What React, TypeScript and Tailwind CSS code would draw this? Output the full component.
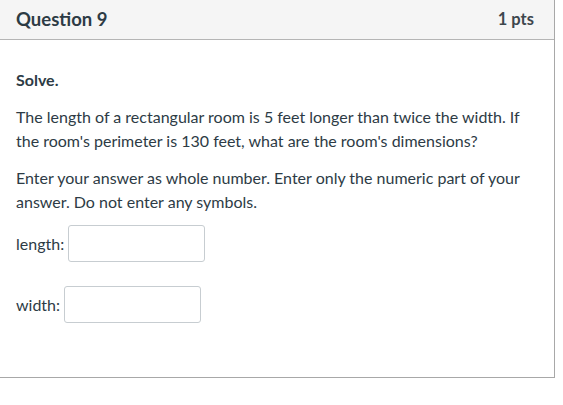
export default function App() {
  return (
    <div className="w-[563px] h-[405px] bg-white" style={{ fontFamily: 'Lato, "Noto Sans", sans-serif' }}>
      <div className="w-[555px] border-r border-b border-[#a8a8a8] text-[#2d3b45]">
        <div className="h-[40px] bg-[#f5f5f5] border-b border-[#b5b5b5] flex items-center justify-between pl-[16px] pr-[20px]">
          <span className="text-[18.5px] font-bold">Question 9</span>
          <span className="text-[16.5px] font-bold text-[#3d464d]">1 pts</span>
        </div>
        <div className="pl-[16px] pr-[20px] pt-[28px] pb-[54px] text-[16px] leading-[24px]">
          <p className="font-bold">Solve.</p>
          <p className="mt-[13px]">The length of a rectangular room is 5 feet longer than twice the width. If the room's perimeter is 130 feet, what are the room's dimensions?</p>
          <p className="mt-[13px]">Enter your answer as whole number. Enter only the numeric part of your answer. Do not enter any symbols.</p>
          <div className="mt-[11px] flex items-center gap-[4px]">
            <span>length:</span>
            <div className="w-[137px] h-[37px] border border-[#c7cdd1] rounded-[3px] bg-white" />
          </div>
          <div className="mt-[24px] flex items-center gap-[4px]">
            <span>width:</span>
            <div className="w-[137px] h-[37px] border border-[#c7cdd1] rounded-[3px] bg-white" />
          </div>
        </div>
      </div>
    </div>
  );
}
